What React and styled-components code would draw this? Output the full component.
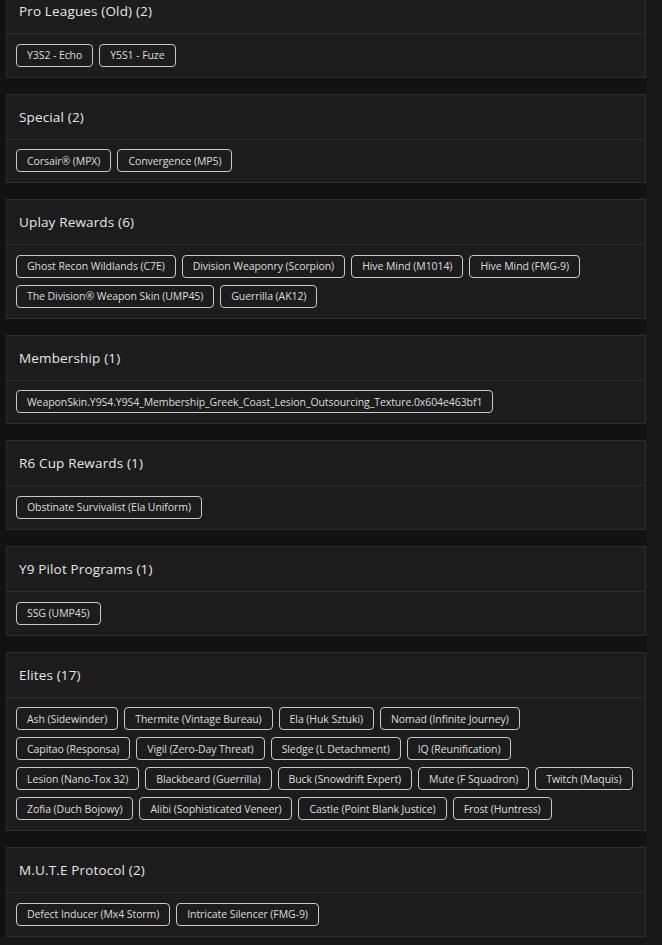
import React from "react";
import styled, { createGlobalStyle } from "styled-components";

const GlobalStyle = createGlobalStyle`
  html, body { margin: 0; padding: 0; }
  body {
    background: #171717;
    font-family: "Open Sans", "Liberation Sans", sans-serif;
    color: #e6e6e6;
    overflow: hidden;
  }
`;

const Page = styled.div`
  width: 646px;
  background: #121212;
  padding: 0 0 0 6px;
  box-sizing: border-box;
  display: flex;
  flex-direction: column;
  gap: 16px;
  margin-top: -12px;
`;

const Card = styled.section`
  background: #1c1c1c;
  border: 1px solid #2c2c2c;
  display: flex;
  flex-direction: column;
`;

const Header = styled.div`
  height: 44px;
  display: flex;
  align-items: center;
  padding: 0 12px;
  border-bottom: 1px solid #2c2c2c;
`;

const Title = styled.h3`
  margin: 0;
  font-size: 13.5px;
  font-weight: 500;
  color: #e6e6e6;
  letter-spacing: 0.15px;
`;

const Body = styled.div`
  padding: 9.6px 9px 10px 9px;
  display: flex;
  flex-wrap: wrap;
  gap: 7px 6px;
`;

const Tag = styled.span`
  display: inline-flex;
  align-items: center;
  height: 23px;
  box-sizing: border-box;
  padding: 0 10px;
  border: 1px solid #c9c9c9;
  border-radius: 4px;
  font-size: 10.5px;
  color: #dcdcdc;
  white-space: nowrap;
  letter-spacing: -0.08px;
`;

const sections = [
  { title: "Pro Leagues (Old)", items: ["Y3S2 - Echo", "Y5S1 - Fuze"] },
  { title: "Special", items: ["Corsair® (MPX)", "Convergence (MP5)"] },
  {
    title: "Uplay Rewards",
    items: [
      "Ghost Recon Wildlands (C7E)",
      "Division Weaponry (Scorpion)",
      "Hive Mind (M1014)",
      "Hive Mind (FMG-9)",
      "The Division® Weapon Skin (UMP45)",
      "Guerrilla (AK12)",
    ],
  },
  {
    title: "Membership",
    items: ["WeaponSkin.Y9S4.Y9S4_Membership_Greek_Coast_Lesion_Outsourcing_Texture.0x604e463bf1"],
  },
  { title: "R6 Cup Rewards", items: ["Obstinate Survivalist (Ela Uniform)"] },
  { title: "Y9 Pilot Programs", items: ["SSG (UMP45)"] },
  {
    title: "Elites",
    items: [
      "Ash (Sidewinder)",
      "Thermite (Vintage Bureau)",
      "Ela (Huk Sztuki)",
      "Nomad (Infinite Journey)",
      "Capitao (Responsa)",
      "Vigil (Zero-Day Threat)",
      "Sledge (L Detachment)",
      "IQ (Reunification)",
      "Lesion (Nano-Tox 32)",
      "Blackbeard (Guerrilla)",
      "Buck (Snowdrift Expert)",
      "Mute (F Squadron)",
      "Twitch (Maquis)",
      "Zofia (Duch Bojowy)",
      "Alibi (Sophisticated Veneer)",
      "Castle (Point Blank Justice)",
      "Frost (Huntress)",
    ],
  },
  { title: "M.U.T.E Protocol", items: ["Defect Inducer (Mx4 Storm)", "Intricate Silencer (FMG-9)"] },
];

export default function App() {
  return (
    <>
      <GlobalStyle />
      <Page>
        {sections.map((s) => (
          <Card key={s.title}>
            <Header>
              <Title>
                {s.title} ({s.items.length})
              </Title>
            </Header>
            <Body>
              {s.items.map((it) => (
                <Tag key={it}>{it}</Tag>
              ))}
            </Body>
          </Card>
        ))}
      </Page>
    </>
  );
}
